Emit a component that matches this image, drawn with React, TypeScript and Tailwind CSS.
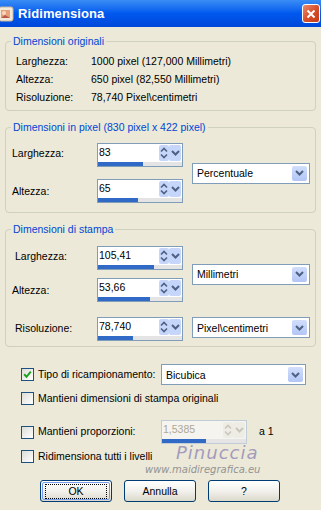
import React from 'react';

const font = { fontFamily: '"Liberation Sans", Arial, sans-serif' };

const Chevron: React.FC = () => (
  <svg width="9" height="6" viewBox="0 0 9 6">
    <path d="M1 1 L4.5 4.5 L8 1" fill="none" stroke="#4D6185" strokeWidth="2" />
  </svg>
);

const UpDown: React.FC<{ disabled?: boolean }> = ({ disabled }) => (
  <svg width="8" height="12" viewBox="0 0 8 12">
    <path d="M1 4.5 L4 1.5 L7 4.5" fill="none" stroke={disabled ? '#C9C7BA' : '#4D6185'} strokeWidth="1.6" />
    <path d="M1 7.5 L4 10.5 L7 7.5" fill="none" stroke={disabled ? '#C9C7BA' : '#4D6185'} strokeWidth="1.6" />
  </svg>
);

const Spinner: React.FC<{ value: string; fill: number; disabled?: boolean }> = ({ value, fill, disabled }) => (
  <div
    className={`w-[86px] h-[24px] border flex flex-col ${
      disabled ? 'border-[#C2CCD6] bg-[#F5F4EE]' : 'border-[#7F9DB9] bg-white'
    }`}
  >
    <div className="flex h-[17px]">
      <div className={`flex-1 pl-[1px] leading-[16px] ${disabled ? 'text-[#ACA899]' : 'text-black'}`}>{value}</div>
      <div
        className={`w-[10px] h-[16px] mt-[1px] flex items-center justify-center rounded-[2px] ${
          disabled ? 'bg-[#EEEDE5]' : 'bg-[#C6D6FA]'
        }`}
      >
        <UpDown disabled={disabled} />
      </div>
      <div
        className={`w-[12px] h-[16px] mt-[1px] mr-[1px] flex items-center justify-center rounded-[2px] ${
          disabled ? 'bg-[#EEEDE5]' : 'bg-[#C6D6FA]'
        }`}
      >
        {disabled ? (
          <svg width="9" height="6" viewBox="0 0 9 6">
            <path d="M1 1 L4.5 4.5 L8 1" fill="none" stroke="#C9C7BA" strokeWidth="2" />
          </svg>
        ) : (
          <Chevron />
        )}
      </div>
    </div>
    <div className="mt-[1px] h-[4px] bg-[#E4E4E4] flex">
      <div className="h-full bg-[#3169C6]" style={{ width: `${fill}%` }} />
    </div>
  </div>
);

const Combo: React.FC<{ value: string; width: string }> = ({ value, width }) => (
  <div className={`${width} h-[21px] border border-[#7F9DB9] bg-white flex items-center`}>
    <div className="flex-1 pl-[4px] leading-[16px]">{value}</div>
    <div className="w-[15px] h-[15px] mr-[2px] rounded-[2px] bg-gradient-to-b from-[#D2DEFB] to-[#B2C6F5] flex items-center justify-center">
      <Chevron />
    </div>
  </div>
);

const Checkbox: React.FC<{ checked?: boolean }> = ({ checked }) => (
  <div className="w-[13px] h-[13px] border border-[#1C5180] bg-gradient-to-br from-[#DCDCD7] to-white flex items-center justify-center shrink-0">
    {checked && (
      <svg width="9" height="9" viewBox="0 0 9 9">
        <path d="M1.2 4.3 L3.5 6.8 L7.8 1.6" fill="none" stroke="#21A121" strokeWidth="2" />
      </svg>
    )}
  </div>
);

const Group: React.FC<{ title: string; className?: string; children: React.ReactNode }> = ({ title, className, children }) => (
  <div className={`mx-[5px] border border-[#D0D0BF] rounded-[4px] ${className ?? ''}`}>
    <div className="-mt-[7px] ml-[5px] px-[2px] w-fit bg-[#ECE9D8] text-[#0046D5] leading-[13px]">{title}</div>
    {children}
  </div>
);

const XpButton: React.FC<{ label: string; primary?: boolean }> = ({ label, primary }) => (
  <div className="w-[72px] h-[22px] rounded-[3px] border border-[#003C74] bg-gradient-to-b from-white via-[#F2F1EC] to-[#DCD8CC] p-[1px]">
    <div
      className={`h-full rounded-[2px] flex items-center justify-center ${
        primary ? 'border border-[#7A9CE8]' : ''
      }`}
    >
      <div className={`px-[1px] leading-[13px] ${primary ? 'border border-dotted border-black w-[62px] text-center' : ''}`}>
        {label}
      </div>
    </div>
  </div>
);

const App: React.FC = () => {
  return (
    <div className="w-[321px] h-[510px] bg-[#ECE9D8] text-[10.5px] text-black overflow-hidden relative" style={font}>
      {/* Title bar */}
      <div className="h-[27px] bg-gradient-to-b from-[#3A8CF4] via-[#0058EE] to-[#0048DA] flex items-center">
        <svg width="16" height="16" viewBox="0 0 16 16" className="-ml-[2px] shrink-0">
          <rect x="1" y="1" width="14" height="14" rx="2" fill="#F3E9DA" stroke="#C9B79E" />
          <rect x="3" y="4" width="9" height="8" fill="#E6A07A" />
          <circle cx="6" cy="7" r="2" fill="#F8D8C0" />
          <path d="M3 12 L7 9 L12 12 Z" fill="#B8584A" />
        </svg>
        <div className="ml-[4px] text-white font-bold text-[13px] tracking-[0.1px]">Ridimensiona</div>
        <div className="ml-auto mr-[1px] w-[18px] h-[19px] rounded-[3px] border border-white bg-gradient-to-br from-[#E98A6D] via-[#D9502C] to-[#C23A16] flex items-center justify-center">
          <svg width="10" height="10" viewBox="0 0 10 10">
            <path d="M1.5 1.5 L8.5 8.5 M8.5 1.5 L1.5 8.5" stroke="white" strokeWidth="2" />
          </svg>
        </div>
      </div>

      {/* Dimensioni originali */}
      <Group title="Dimensioni originali" className="mt-[14px] h-[70px]">
        <div className="mt-[5px] pl-[10px]">
          <div className="h-[18px] flex items-center">
            <div className="w-[75px]">Larghezza:</div>
            <div>1000 pixel (127,000 Millimetri)</div>
          </div>
          <div className="h-[18px] flex items-center">
            <div className="w-[75px]">Altezza:</div>
            <div>650 pixel (82,550 Millimetri)</div>
          </div>
          <div className="h-[18px] flex items-center">
            <div className="w-[75px]">Risoluzione:</div>
            <div>78,740 Pixel\centimetri</div>
          </div>
        </div>
      </Group>

      {/* Dimensioni in pixel */}
      <Group title="Dimensioni in pixel (830 pixel x 422 pixel)" className="mt-[16px]">
        <div className="mt-[9px] pb-[9px] pl-[6px] flex items-center">
          <div className="flex flex-col gap-[12px]">
            <div className="flex items-center">
              <div className="w-[85px] -mt-[3px]">Larghezza:</div>
              <Spinner value="83" fill={54} />
            </div>
            <div className="flex items-center">
              <div className="w-[85px] mt-[2px]">Altezza:</div>
              <Spinner value="65" fill={48} />
            </div>
          </div>
          <div className="ml-[9px]">
            <Combo value="Percentuale" width="w-[118px]" />
          </div>
        </div>
      </Group>

      {/* Dimensioni di stampa */}
      <Group title="Dimensioni di stampa" className="mt-[16px]">
        <div className="mt-[10px] pb-[5px] pl-[6px]">
          <div className="flex items-center">
            <div className="flex flex-col gap-[8px]">
              <div className="flex items-center">
                <div className="w-[85px] pl-[3px] -mt-[3px]">Larghezza:</div>
                <Spinner value="105,41" fill={67} />
              </div>
              <div className="flex items-center">
                <div className="w-[85px] mt-[1px]">Altezza:</div>
                <Spinner value="53,66" fill={62} />
              </div>
            </div>
            <div className="ml-[9px]">
              <Combo value="Millimetri" width="w-[118px]" />
            </div>
          </div>
          <div className="mt-[15px] flex items-center">
            <div className="w-[85px] pl-[3px]">Risoluzione:</div>
            <Spinner value="78,740" fill={42} />
            <div className="ml-[9px] -mt-[3px]">
              <Combo value="Pixel\centimetri" width="w-[118px]" />
            </div>
          </div>
        </div>
      </Group>

      {/* Options */}
      <div className="pl-[21px]">
        <div className="mt-[17px] h-[21px] flex items-center">
          <Checkbox checked />
          <div className="ml-[4px] w-[123px]">Tipo di ricampionamento:</div>
          <Combo value="Bicubica" width="w-[145px]" />
        </div>
        <div className="mt-[7px] h-[13px] flex items-center">
          <Checkbox />
          <div className="ml-[4px]">Mantieni dimensioni di stampa originali</div>
        </div>
        <div className="mt-[15px] h-[24px] flex items-center">
          <Checkbox />
          <div className="ml-[4px] w-[123px]">Mantieni proporzioni:</div>
          <Spinner value="1,5385" fill={52} disabled />
          <div className="ml-[12px]">a 1</div>
        </div>
        <div className="mt-[6px] h-[13px] flex items-center">
          <Checkbox />
          <div className="ml-[4px]">Ridimensiona tutti i livelli</div>
        </div>
      </div>

      {/* Buttons */}
      <div className="mt-[17px] pl-[40px] flex gap-[12px]">
        <XpButton label="OK" primary />
        <XpButton label="Annulla" />
        <XpButton label="?" />
      </div>

      {/* Watermark */}
      <div
        className="absolute left-[176px] top-[444px] text-[18px] leading-[18px] italic text-[#A39BBD] tracking-[1px]"
        style={{ fontFamily: '"DejaVu Sans", sans-serif' }}
      >
        Pinuccia
      </div>
      <div
        className="absolute left-[145px] top-[464px] text-[10px] leading-[11px] italic text-[#939393]"
        style={{ fontFamily: '"DejaVu Sans", sans-serif' }}
      >
        www.maidiregrafica.eu
      </div>
    </div>
  );
};

export default App;
